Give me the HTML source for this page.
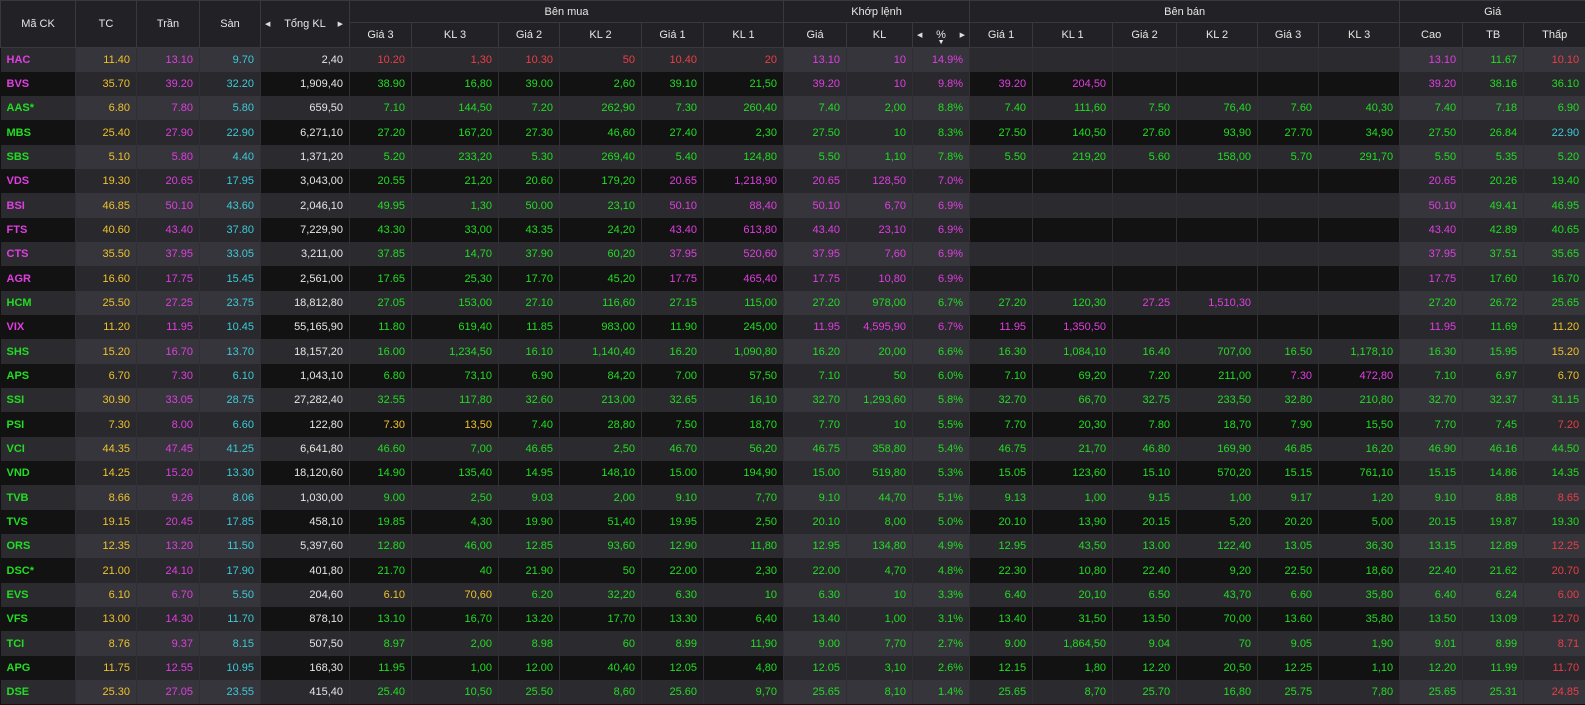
<!DOCTYPE html>
<html><head><meta charset="utf-8">
<style>
html,body{margin:0;padding:0;background:#121212;width:1585px;height:705px;overflow:hidden}
table{border-collapse:collapse;table-layout:fixed;width:1585px;font-family:"Liberation Sans",Arial,sans-serif;font-size:11px}
th{background:#222226;color:#e6e6e6;font-weight:normal;border:1px solid #38383e;padding:0;position:relative}
tr.h1 th{height:21px}
tr.h2 th{height:24px}
td{padding:0 6px 0 0;text-align:right;border-right:1px solid #2f2f35;white-space:nowrap;overflow:hidden;height:24.33px;box-sizing:border-box}
td.s{text-align:left;padding-left:6px;font-weight:bold}
tr.o td{background:#2a2a2f}
tr.o td.l{background:#35353b}
tr.e td{background:#121212}
tr.e td.l{background:#28282d}
.y{color:#efc22a}.g{color:#22dd22}.r{color:#ec3e48}.c{color:#3ccbd8}.m{color:#e03ee0}.w{color:#e6e6e6}
.ar{position:absolute;font-size:7px;color:#ddd;top:50%;transform:translateY(-50%)}
</style></head><body>
<table id="t">
<colgroup>
<col style="width:75px"><col style="width:61px"><col style="width:63px"><col style="width:61px"><col style="width:89px">
<col style="width:62px"><col style="width:87px"><col style="width:61px"><col style="width:82px"><col style="width:62px"><col style="width:80px">
<col style="width:63px"><col style="width:66px"><col style="width:57px">
<col style="width:63px"><col style="width:80px"><col style="width:64px"><col style="width:81px"><col style="width:61px"><col style="width:81px">
<col style="width:63px"><col style="width:61px"><col style="width:62px">
</colgroup>
<thead>
<tr class="h1"><th rowspan="2">Mã CK</th><th rowspan="2">TC</th><th rowspan="2">Trần</th><th rowspan="2">Sàn</th><th rowspan="2"><span class="ar" style="left:4px">◀</span>Tổng KL<span class="ar" style="right:6px">▶</span></th>
<th colspan="6">Bên mua</th><th colspan="3">Khớp lệnh</th><th colspan="6">Bên bán</th><th colspan="3">Giá</th></tr>
<tr class="h2"><th>Giá 3</th><th>KL 3</th><th>Giá 2</th><th>KL 2</th><th>Giá 1</th><th>KL 1</th>
<th>Giá</th><th>KL</th><th><span class="ar" style="left:4px">◀</span>%<span style="position:absolute;left:50%;bottom:1px;transform:translateX(-50%);font-size:7px">▼</span><span class="ar" style="right:4px">▶</span></th>
<th>Giá 1</th><th>KL 1</th><th>Giá 2</th><th>KL 2</th><th>Giá 3</th><th>KL 3</th><th>Cao</th><th>TB</th><th>Thấp</th></tr>
</thead>
<tbody id="b"></tbody>
</table>
<script>
var D=`HAC 11.40 13.10 9.70 2,40 10.20 1,30 10.30 50 10.40 20 13.10 10 14.9% - - - - - - 13.10 11.67 10.10
BVS 35.70 39.20 32.20 1,909,40 38.90 16,80 39.00 2,60 39.10 21,50 39.20 10 9.8% 39.20 204,50 - - - - 39.20 38.16 36.10
AAS* 6.80 7.80 5.80 659,50 7.10 144,50 7.20 262,90 7.30 260,40 7.40 2,00 8.8% 7.40 111,60 7.50 76,40 7.60 40,30 7.40 7.18 6.90
MBS 25.40 27.90 22.90 6,271,10 27.20 167,20 27.30 46,60 27.40 2,30 27.50 10 8.3% 27.50 140,50 27.60 93,90 27.70 34,90 27.50 26.84 22.90
SBS 5.10 5.80 4.40 1,371,20 5.20 233,20 5.30 269,40 5.40 124,80 5.50 1,10 7.8% 5.50 219,20 5.60 158,00 5.70 291,70 5.50 5.35 5.20
VDS 19.30 20.65 17.95 3,043,00 20.55 21,20 20.60 179,20 20.65 1,218,90 20.65 128,50 7.0% - - - - - - 20.65 20.26 19.40
BSI 46.85 50.10 43.60 2,046,10 49.95 1,30 50.00 23,10 50.10 88,40 50.10 6,70 6.9% - - - - - - 50.10 49.41 46.95
FTS 40.60 43.40 37.80 7,229,90 43.30 33,00 43.35 24,20 43.40 613,80 43.40 23,10 6.9% - - - - - - 43.40 42.89 40.65
CTS 35.50 37.95 33.05 3,211,00 37.85 14,70 37.90 60,20 37.95 520,60 37.95 7,60 6.9% - - - - - - 37.95 37.51 35.65
AGR 16.60 17.75 15.45 2,561,00 17.65 25,30 17.70 45,20 17.75 465,40 17.75 10,80 6.9% - - - - - - 17.75 17.60 16.70
HCM 25.50 27.25 23.75 18,812,80 27.05 153,00 27.10 116,60 27.15 115,00 27.20 978,00 6.7% 27.20 120,30 27.25 1,510,30 - - 27.20 26.72 25.65
VIX 11.20 11.95 10.45 55,165,90 11.80 619,40 11.85 983,00 11.90 245,00 11.95 4,595,90 6.7% 11.95 1,350,50 - - - - 11.95 11.69 11.20
SHS 15.20 16.70 13.70 18,157,20 16.00 1,234,50 16.10 1,140,40 16.20 1,090,80 16.20 20,00 6.6% 16.30 1,084,10 16.40 707,00 16.50 1,178,10 16.30 15.95 15.20
APS 6.70 7.30 6.10 1,043,10 6.80 73,10 6.90 84,20 7.00 57,50 7.10 50 6.0% 7.10 69,20 7.20 211,00 7.30 472,80 7.10 6.97 6.70
SSI 30.90 33.05 28.75 27,282,40 32.55 117,80 32.60 213,00 32.65 16,10 32.70 1,293,60 5.8% 32.70 66,70 32.75 233,50 32.80 210,80 32.70 32.37 31.15
PSI 7.30 8.00 6.60 122,80 7.30 13,50 7.40 28,80 7.50 18,70 7.70 10 5.5% 7.70 20,30 7.80 18,70 7.90 15,50 7.70 7.45 7.20
VCI 44.35 47.45 41.25 6,641,80 46.60 7,00 46.65 2,50 46.70 56,20 46.75 358,80 5.4% 46.75 21,70 46.80 169,90 46.85 16,20 46.90 46.16 44.50
VND 14.25 15.20 13.30 18,120,60 14.90 135,40 14.95 148,10 15.00 194,90 15.00 519,80 5.3% 15.05 123,60 15.10 570,20 15.15 761,10 15.15 14.86 14.35
TVB 8.66 9.26 8.06 1,030,00 9.00 2,50 9.03 2,00 9.10 7,70 9.10 44,70 5.1% 9.13 1,00 9.15 1,00 9.17 1,20 9.10 8.88 8.65
TVS 19.15 20.45 17.85 458,10 19.85 4,30 19.90 51,40 19.95 2,50 20.10 8,00 5.0% 20.10 13,90 20.15 5,20 20.20 5,00 20.15 19.87 19.30
ORS 12.35 13.20 11.50 5,397,60 12.80 46,00 12.85 93,60 12.90 11,80 12.95 134,80 4.9% 12.95 43,50 13.00 122,40 13.05 36,30 13.15 12.89 12.25
DSC* 21.00 24.10 17.90 401,80 21.70 40 21.90 50 22.00 2,30 22.00 4,70 4.8% 22.30 10,80 22.40 9,20 22.50 18,60 22.40 21.62 20.70
EVS 6.10 6.70 5.50 204,60 6.10 70,60 6.20 32,20 6.30 10 6.30 10 3.3% 6.40 20,10 6.50 43,70 6.60 35,80 6.40 6.24 6.00
VFS 13.00 14.30 11.70 878,10 13.10 16,70 13.20 17,70 13.30 6,40 13.40 1,00 3.1% 13.40 31,50 13.50 70,00 13.60 35,80 13.50 13.09 12.70
TCI 8.76 9.37 8.15 507,50 8.97 2,00 8.98 60 8.99 11,90 9.00 7,70 2.7% 9.00 1,864,50 9.04 70 9.05 1,90 9.01 8.99 8.71
APG 11.75 12.55 10.95 168,30 11.95 1,00 12.00 40,40 12.05 4,80 12.05 3,10 2.6% 12.15 1,80 12.20 20,50 12.25 1,10 12.20 11.99 11.70
DSE 25.30 27.05 23.55 415,40 25.40 10,50 25.50 8,60 25.60 9,70 25.65 8,10 1.4% 25.65 8,70 25.70 16,80 25.75 7,80 25.65 25.31 24.85`;
var light={1:1,2:1,3:1,11:1,12:1,13:1,20:1,21:1,22:1};
var h='';
D.split('\n').forEach(function(line,i){
 var a=line.trim().split(/\s+/);
 var tc=+a[1],ce=+a[2],fl=+a[3];
 function col(p){p=+p;if(p==ce)return'm';if(p==fl)return'c';if(p==tc)return'y';return p>tc?'g':'r';}
 var cls=new Array(23);
 cls[0]=col(a[11]);cls[1]='y';cls[2]='m';cls[3]='c';cls[4]='w';
 [5,7,9,11,14,16,18].forEach(function(k){if(a[k]!='-'){cls[k]=col(a[k]);cls[k+1]=cls[k];}});
 cls[13]=cls[11];
 [20,21,22].forEach(function(k){cls[k]=col(a[k]);});
 h+='<tr class="'+(i%2?'e':'o')+'">';
 for(var k=0;k<23;k++){
  var v=a[k]=='-'?'':a[k];
  var c=(k==0?'s ':'')+(light[k]?'l ':'')+(cls[k]||'');
  h+='<td class="'+c+'">'+v+'</td>';
 }
 h+='</tr>';
});
document.getElementById('b').innerHTML=h;
</script>
</body></html>
